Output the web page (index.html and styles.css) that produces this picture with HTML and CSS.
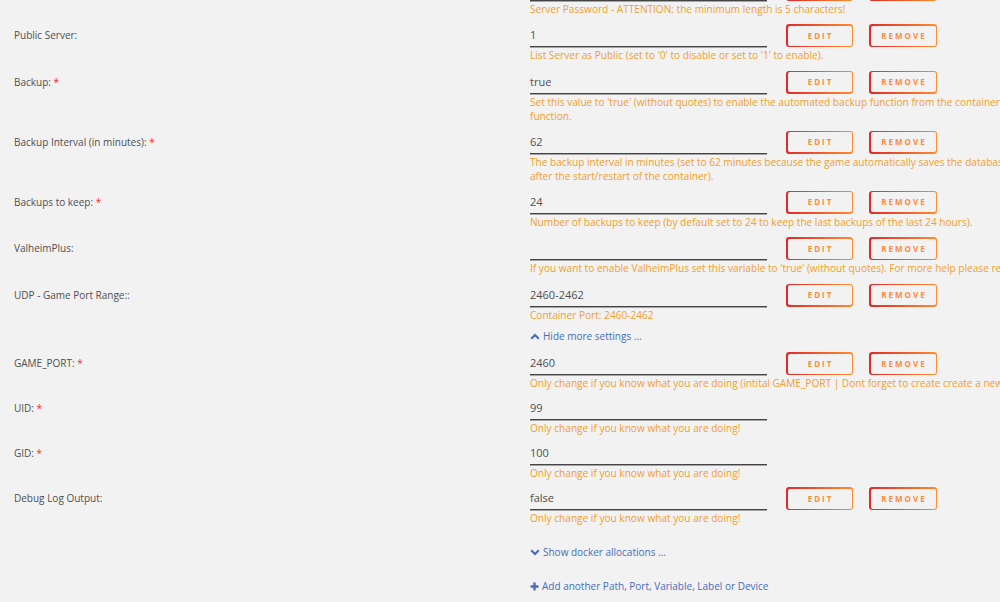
FILE: index.html
```html
<!DOCTYPE html>
<html lang="en">
<head>
  <meta charset="UTF-8" />
  <meta name="viewport" content="width=device-width, initial-scale=1.0"/>
  <title>Update Container</title>
  <link rel="stylesheet" href="styles.css">
</head>
<body>
<form class="config">

  <div class="row">
    <label class="label">Server Password: <span class="req">*</span></label>
    <div class="field">
      <div class="line">
        <span class="value"></span>
        <button type="button" class="btn"><span>Edit</span></button>
        <button type="button" class="btn wide"><span>Remove</span></button>
      </div>
      <div class="desc">Server Password - ATTENTION: the minimum length is 5 characters!</div>
    </div>
  </div>

  <div class="row">
    <label class="label">Public Server:</label>
    <div class="field">
      <div class="line">
        <span class="value">1</span>
        <button type="button" class="btn"><span>Edit</span></button>
        <button type="button" class="btn wide"><span>Remove</span></button>
      </div>
      <div class="desc">List Server as Public (set to '0' to disable or set to '1' to enable).</div>
    </div>
  </div>

  <div class="row two">
    <label class="label">Backup: <span class="req">*</span></label>
    <div class="field">
      <div class="line">
        <span class="value">true</span>
        <button type="button" class="btn"><span>Edit</span></button>
        <button type="button" class="btn wide"><span>Remove</span></button>
      </div>
      <div class="desc">Set this value to 'true' (without quotes) to enable the automated backup function from the container, you also have to set the backup interval or leave it empty to disable the backup<br>function.</div>
    </div>
  </div>

  <div class="row two">
    <label class="label">Backup Interval (in minutes): <span class="req">*</span></label>
    <div class="field">
      <div class="line">
        <span class="value">62</span>
        <button type="button" class="btn"><span>Edit</span></button>
        <button type="button" class="btn wide"><span>Remove</span></button>
      </div>
      <div class="desc">The backup interval in minutes (set to 62 minutes because the game automatically saves the database every 60 minutes, the first backup will be made 62 minutes<br>after the start/restart of the container).</div>
    </div>
  </div>

  <div class="row">
    <label class="label">Backups to keep: <span class="req">*</span></label>
    <div class="field">
      <div class="line">
        <span class="value">24</span>
        <button type="button" class="btn"><span>Edit</span></button>
        <button type="button" class="btn wide"><span>Remove</span></button>
      </div>
      <div class="desc">Number of backups to keep (by default set to 24 to keep the last backups of the last 24 hours).</div>
    </div>
  </div>

  <div class="row">
    <label class="label">ValheimPlus:</label>
    <div class="field">
      <div class="line">
        <span class="value"></span>
        <button type="button" class="btn"><span>Edit</span></button>
        <button type="button" class="btn wide"><span>Remove</span></button>
      </div>
      <div class="desc">If you want to enable ValheimPlus set this variable to 'true' (without quotes). For more help please refer to the support thread.</div>
    </div>
  </div>

  <div class="row">
    <label class="label">UDP - Game Port Range::</label>
    <div class="field">
      <div class="line">
        <span class="value">2460-2462</span>
        <button type="button" class="btn"><span>Edit</span></button>
        <button type="button" class="btn wide"><span>Remove</span></button>
      </div>
      <div class="desc">Container Port: 2460-2462</div>
    </div>
  </div>

  <a class="toggle hide" href="#">
    <svg width="10" height="7" viewBox="0 0 10 7"><polyline points="1.2,5.8 5,2 8.8,5.8" fill="none" stroke="currentColor" stroke-width="2.2"/></svg>
    Hide more settings ...
  </a>

  <!-- advanced settings -->
  <div class="row adv">
    <label class="label">GAME_PORT: <span class="req">*</span></label>
    <div class="field">
      <div class="line">
        <span class="value">2460</span>
        <button type="button" class="btn"><span>Edit</span></button>
        <button type="button" class="btn wide"><span>Remove</span></button>
      </div>
      <div class="desc">Only change if you know what you are doing (intital GAME_PORT | Dont forget to create create a new UDP Port entry with the matching range).</div>
    </div>
  </div>

  <div class="row adv">
    <label class="label">UID: <span class="req">*</span></label>
    <div class="field">
      <div class="line"><span class="value">99</span></div>
      <div class="desc">Only change if you know what you are doing!</div>
    </div>
  </div>

  <div class="row adv">
    <label class="label">GID: <span class="req">*</span></label>
    <div class="field">
      <div class="line"><span class="value">100</span></div>
      <div class="desc">Only change if you know what you are doing!</div>
    </div>
  </div>

  <div class="row adv">
    <label class="label">Debug Log Output:</label>
    <div class="field">
      <div class="line">
        <span class="value">false</span>
        <button type="button" class="btn"><span>Edit</span></button>
        <button type="button" class="btn wide"><span>Remove</span></button>
      </div>
      <div class="desc">Only change if you know what you are doing!</div>
    </div>
  </div>

  <a class="toggle show" href="#">
    <svg width="10" height="7" viewBox="0 0 10 7"><polyline points="1.2,1.2 5,5 8.8,1.2" fill="none" stroke="currentColor" stroke-width="2.2"/></svg>
    Show docker allocations ...
  </a>

  <a class="toggle add" href="#">
    <svg width="9" height="9" viewBox="0 0 9 9"><path d="M4.5 0.5v8M0.5 4.5h8" fill="none" stroke="currentColor" stroke-width="2.4"/></svg>
    Add another Path, Port, Variable, Label or Device
  </a>

</form>
</body>
</html>
```
FILE: styles.css
```css
html, body { overflow: hidden; }
body {
  margin: 0;
  background: #f2f2f2;
  color: #4f4f4f;
  font-family: "Open Sans", sans-serif;
  font-size: 10px;
}

/* the page is scrolled a little: the first row is cut off at the top */
.config { margin-top: -22.5px; padding-left: 14px; }

.row {
  display: flex;
  padding-bottom: 8.5px;
}
.row.two { padding-bottom: 8px; }
.row.adv { padding-bottom: 7px; }
.label {
  flex: none;
  width: 516px;
  line-height: 23px;
}
.req { color: #f22; }

.field { flex: none; }
.line { display: flex; align-items: center; }
.value {
  box-sizing: border-box;
  width: 237px;
  height: 23px;
  line-height: 22px;
  font-size: 11px;
  color: #505050;
  border-bottom: 1px solid #444;
  box-shadow: 0 1px 0 rgba(68, 68, 68, 0.45);
  margin-right: 19px;
}
.desc {
  margin-top: 1px;
  white-space: nowrap;
  line-height: 14px;
  font-size: 10.1px;
  color: #f0a030;
}

/* gradient-bordered buttons */
.btn {
  flex: none;
  width: 67px;
  height: 23px;
  margin-right: 16px;
  padding: 1.5px;
  border: none;
  border-radius: 3px;
  background: linear-gradient(90deg, #e22828 0, #ff8c2f);
  cursor: pointer;
  font-family: inherit;
}
.btn.wide { width: 68px; }
.btn span {
  display: block;
  height: 100%;
  border-radius: 2px;
  background: #f2f2f2;
  color: #fb8c3c;
  font-size: 8px;
  font-weight: bold;
  letter-spacing: 2px;
  padding-left: 2px;
  line-height: 20px;
  text-transform: uppercase;
}

.toggle {
  display: flex;
  align-items: center;
  gap: 3px;
  margin-left: 516px;
  line-height: 12px;
  color: #486dba;
  text-decoration: none;
}
.toggle svg { flex: none; }
.toggle.hide { margin-bottom: 10px; }
.toggle.show { margin-top: 14px; margin-bottom: 22px; }
```
